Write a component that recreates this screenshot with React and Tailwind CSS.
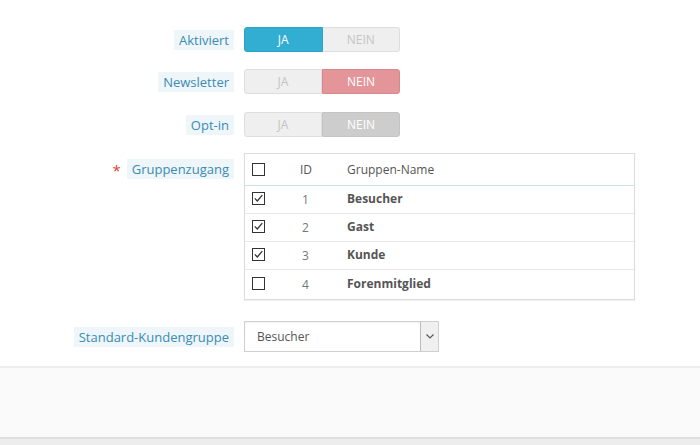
import React from 'react';

const font = { fontFamily: '"Open Sans", "Liberation Sans", sans-serif' };

const Label = ({ children, required }) => (
  <div className="w-[234px] shrink-0 flex justify-end items-center pr-0">
    {required && <span className="text-[#e0403a] text-[15px] mr-[6px] leading-none mt-[2px]">*</span>}
    <span className="bg-[#eef6fa] text-[#3b8bb3] text-[13px] px-[5px] py-[1px] leading-[18px]">{children}</span>
  </div>
);

const Toggle = ({ value, disabled }) => {
  const jaOn = value === 'ja';
  return (
    <div className="flex w-[156px] h-[25px] text-[12px] uppercase">
      <div className={
        jaOn
          ? 'flex-1 flex items-center justify-center rounded-l-[3px] bg-[#33aed3] text-white border border-[#2ba2c6]'
          : 'flex-1 flex items-center justify-center rounded-l-[3px] bg-[#efefef] text-[#c4c4c4] border border-[#dedede]'
      }>JA</div>
      <div className={
        jaOn
          ? 'flex-1 flex items-center justify-center rounded-r-[3px] bg-[#efefef] text-[#c4c4c4] border border-l-0 border-[#dedede]'
          : disabled
            ? 'flex-1 flex items-center justify-center rounded-r-[3px] bg-[#cdcdcd] text-white border border-[#c4c4c4]'
            : 'flex-1 flex items-center justify-center rounded-r-[3px] bg-[#e3959a] text-white border border-[#d8878c]'
      }>NEIN</div>
    </div>
  );
};

const Box = ({ checked }) => (
  <svg width="13" height="13" viewBox="0 0 13 13" className="block">
    <rect x="0.5" y="0.5" width="12" height="12" fill="white" stroke="#333" strokeWidth="1" />
    {checked && <path d="M2.8 6.4 L5.3 9 L10.3 3.2" fill="none" stroke="#333" strokeWidth="1.3" />}
  </svg>
);

const groups = [
  { id: 1, name: 'Besucher', checked: true },
  { id: 2, name: 'Gast', checked: true },
  { id: 3, name: 'Kunde', checked: true },
  { id: 4, name: 'Forenmitglied', checked: false },
];

export default function App() {
  return (
    <div className="w-[700px] h-[445px] bg-white flex flex-col overflow-hidden" style={font}>
      <div className="flex flex-col pt-[27px]">
        <div className="flex items-center gap-[10px] h-[25px]">
          <Label>Aktiviert</Label>
          <Toggle value="ja" />
        </div>
        <div className="flex items-center gap-[10px] h-[25px] mt-[17px]">
          <Label>Newsletter</Label>
          <Toggle value="nein" />
        </div>
        <div className="flex items-center gap-[10px] h-[25px] mt-[18px]">
          <Label>Opt-in</Label>
          <Toggle value="nein" disabled />
        </div>

        <div className="flex items-start gap-[10px] mt-[16px]">
          <div className="pt-[6px]"><Label required>Gruppenzugang</Label></div>
          <div className="w-[391px] border border-[#dcdcdc] shadow-[0_1px_1px_rgba(0,0,0,0.06)] text-[12px]">
            <div className="flex items-center h-[32px] border-b border-[#c9e3ee] text-[#555]">
              <div className="w-[47px] pl-[7px]"><Box /></div>
              <div className="w-[55px] pl-[8px]">ID</div>
              <div className="flex-1">Gruppen-Name</div>
            </div>
            {groups.map((g, i) => (
              <div key={g.id} className={i < groups.length - 1 ? 'flex items-center h-[28px] border-b border-[#e8e8e8]' : 'flex items-center h-[29px]'}>
                <div className="w-[47px] pl-[7px] -mt-[2px]"><Box checked={g.checked} /></div>
                <div className="w-[55px] pl-[10px] text-[#777] mt-[1px]">{g.id}</div>
                <div className="flex-1 font-bold text-[#555] -mt-[1px]">{g.name}</div>
              </div>
            ))}
          </div>
        </div>

        <div className="flex items-center gap-[10px] mt-[21px]">
          <Label>Standard-Kundengruppe</Label>
          <div className="w-[195px] h-[31px] border border-[#cfcfcf] flex items-stretch shadow-[inset_0_1px_2px_rgba(0,0,0,0.06)]">
            <div className="flex-1 flex items-center pl-[12px] text-[12px] text-[#555]">Besucher</div>
            <div className="w-[18px] bg-[#f0f0f0] border-l border-[#bdbdbd] flex items-center justify-center">
              <svg width="8" height="5" viewBox="0 0 8 5"><path d="M0.5 0.5 L4 4 L7.5 0.5" fill="none" stroke="#555" strokeWidth="1.1" /></svg>
            </div>
          </div>
        </div>
      </div>

      <div className="mt-[14px] border-t-2 border-[#ececec] bg-[#fafafa] h-[71px]"></div>
      <div className="border-t-2 border-[#dedede] bg-[#ededed] flex-1"></div>
    </div>
  );
}
